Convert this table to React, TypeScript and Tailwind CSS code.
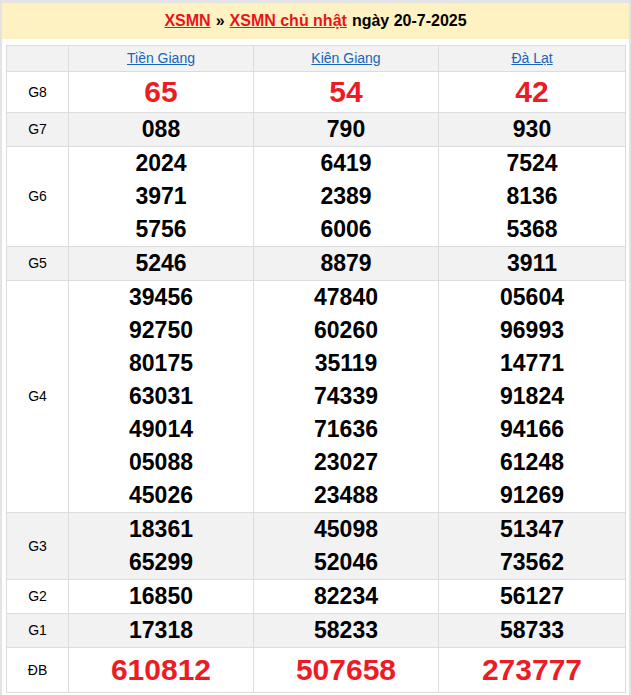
import React from 'react';

const provinces = ['Tiền Giang', 'Kiên Giang', 'Đà Lạt'];

const rows: { label: string; values: string[][]; big?: boolean; gray?: boolean }[] = [
  { label: 'G8', values: [['65'], ['54'], ['42']], big: true },
  { label: 'G7', values: [['088'], ['790'], ['930']], gray: true },
  { label: 'G6', values: [['2024', '3971', '5756'], ['6419', '2389', '6006'], ['7524', '8136', '5368']] },
  { label: 'G5', values: [['5246'], ['8879'], ['3911']], gray: true },
  {
    label: 'G4',
    values: [
      ['39456', '92750', '80175', '63031', '49014', '05088', '45026'],
      ['47840', '60260', '35119', '74339', '71636', '23027', '23488'],
      ['05604', '96993', '14771', '91824', '94166', '61248', '91269'],
    ],
  },
  { label: 'G3', values: [['18361', '65299'], ['45098', '52046'], ['51347', '73562']], gray: true },
  { label: 'G2', values: [['16850'], ['82234'], ['56127']] },
  { label: 'G1', values: [['17318'], ['58233'], ['58733']], gray: true },
  { label: 'ĐB', values: [['610812'], ['507658'], ['273777']], big: true },
];

const App: React.FC = () => {
  return (
    <div className="w-[631px] h-[695px] bg-white font-['Liberation_Sans',Arial,sans-serif] border-t-[3px] border-t-[#e3e3e3] border-l-2 border-l-[#e3e3e3] border-r-2 border-r-[#e3e3e3] overflow-hidden">
      <div className="h-[36px] bg-[#fff2c2] flex items-center justify-center text-[16px] font-bold text-black">
        <a className="text-[#e8141c] underline">XSMN</a>
        <span className="mx-[5px]">»</span>
        <a className="text-[#e8141c] underline">XSMN chủ nhật</a>
        <span className="ml-[5px]">ngày 20-7-2025</span>
      </div>
      <div className="px-[4px] pt-[6px]">
        <table className="w-[619px] border-collapse table-fixed">
          <colgroup>
            <col className="w-[62px]" />
            <col className="w-[185px]" />
            <col className="w-[185px]" />
            <col className="w-[187px]" />
          </colgroup>
          <thead>
            <tr className="h-[26px] bg-[#f2f2f2]">
              <th className="border border-[#dcdcdc]"></th>
              {provinces.map((p) => (
                <th key={p} className="border border-[#dcdcdc] text-[14px] font-normal text-[#1565b8] underline align-middle">
                  {p}
                </th>
              ))}
            </tr>
          </thead>
          <tbody>
            {rows.map((r) => (
              <tr key={r.label} className={r.gray ? 'bg-[#f2f2f2]' : 'bg-white'}>
                <td className="border border-[#dcdcdc] text-center text-[14px] text-black align-middle">{r.label}</td>
                {r.values.map((col, i) => (
                  <td key={i} className="border border-[#dcdcdc] text-center align-middle">
                    {col.map((v) =>
                      r.big ? (
                        <div
                          key={v}
                          className={`font-bold text-[#ed1c24] text-[30px] ${r.label === 'ĐB' ? 'leading-[44px]' : 'leading-[40px]'}`}
                        >
                          {v}
                        </div>
                      ) : (
                        <div key={v} className="font-bold text-black text-[23px] leading-[33px]">
                          {v}
                        </div>
                      )
                    )}
                  </td>
                ))}
              </tr>
            ))}
          </tbody>
        </table>
      </div>
    </div>
  );
};

export default App;
